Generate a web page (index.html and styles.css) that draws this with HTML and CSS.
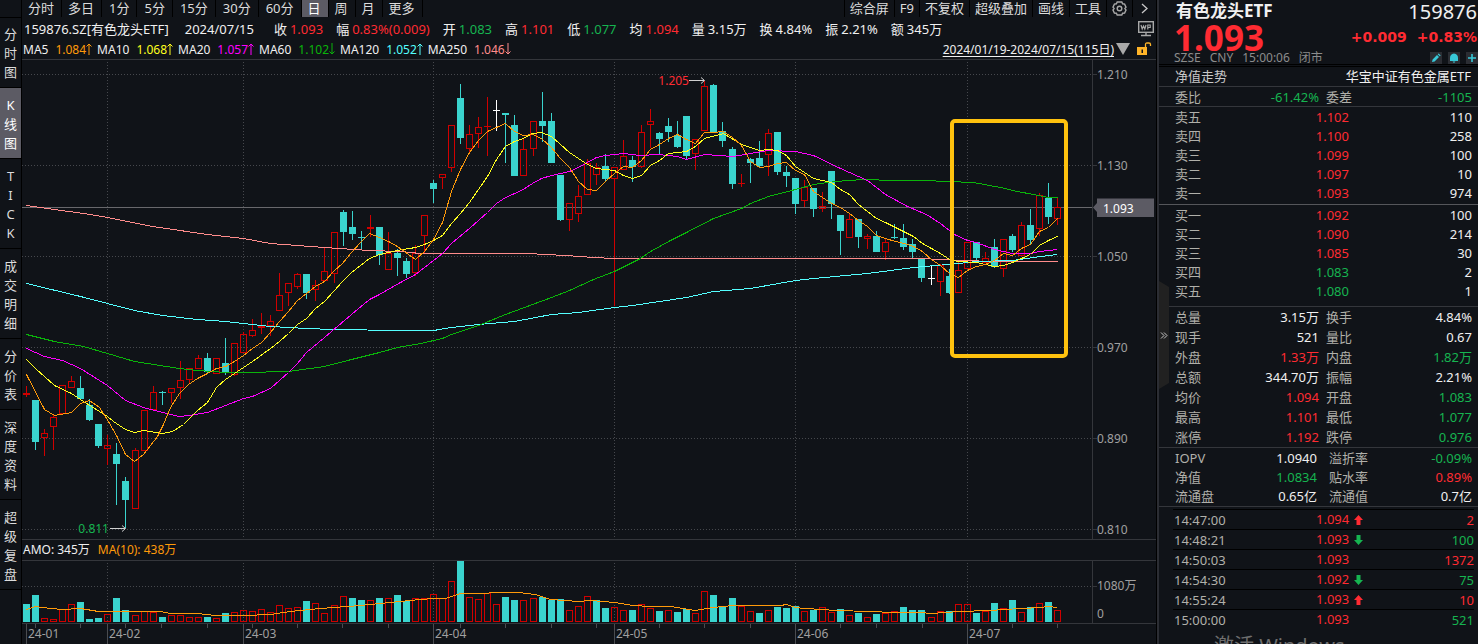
FILE: index.html
```html
<!DOCTYPE html>
<html lang="zh-CN">
<head>
<meta charset="utf-8">
<title>有色龙头ETF 159876</title>
<link rel="stylesheet" href="styles.css">
</head>
<body>
<div class="app">
  <nav class="side">
    <button class="side-item"><span>分</span><span>时</span><span>图</span></button>
    <button class="side-item active"><span>K</span><span>线</span><span>图</span></button>
    <button class="side-item"><span>T</span><span>I</span><span>C</span><span>K</span></button>
    <button class="side-item"><span>成</span><span>交</span><span>明</span><span>细</span></button>
    <button class="side-item"><span>分</span><span>价</span><span>表</span></button>
    <button class="side-item"><span>深</span><span>度</span><span>资</span><span>料</span></button>
    <button class="side-item"><span>超</span><span>级</span><span>复</span><span>盘</span></button>
  </nav>

  <main class="main">
    <div class="toolbar">
      <div class="tabs">
        <button class="tab">分时</button><button class="tab">多日</button><button class="tab num">1分</button><button class="tab num">5分</button><button class="tab num">15分</button><button class="tab num">30分</button><button class="tab num">60分</button><button class="tab active">日</button><button class="tab">周</button><button class="tab">月</button><button class="tab">更多</button>
      </div>
      <div class="tools">
        <button class="tool">综合屏</button><button class="tool">F9</button><button class="tool">不复权</button><button class="tool">超级叠加</button><button class="tool">画线</button><button class="tool">工具</button>
        <button class="tool" aria-label="设置"><svg width="15" height="15" viewBox="0 0 15 15" fill="none" stroke="#a8a8a8" stroke-width="1.4"><path d="M5.2 1h4.6l.8 1.8 2 .3L14 6.200 12.900 7.500 14 9l-1.400 3-2 .2-.8 1.800H5.200l-.8-1.800-2-.2L1 9l1.100-1.500L1 6.200l1.400-3.100 2-.3z"/><circle cx="7.500" cy="7.500" r="2.300"/></svg></button>
        <button class="tool last" aria-label="展开"><svg width="7" height="11" viewBox="0 0 7 11" fill="none" stroke="#c8c8c8" stroke-width="1.3"><path d="M1 1l5 4.500L1 10"/></svg></button>
      </div>
    </div>

    <div class="quote">
      <span class="code">159876.SZ[有色龙头ETF]</span><span class="date">2024/07/15</span>
      <span class="q">收<b class="up">1.093</b></span>
      <span class="q">幅<b class="up">0.83%(0.009)</b></span>
      <span class="q">开<b class="down">1.083</b></span>
      <span class="q">高<b class="up">1.101</b></span>
      <span class="q">低<b class="down">1.077</b></span>
      <span class="q">均<b class="up">1.094</b></span>
      <span class="q">量<b>3.15万</b></span>
      <span class="q">换<b>4.84%</b></span>
      <span class="q">振<b>2.21%</b></span>
      <span class="q">额<b>345万</b></span>
      <svg class="wp" width="16" height="16" viewBox="0 0 16 16" fill="none" stroke="#a8a8a8"><rect x=".7" y=".7" width="14.600" height="10.600" stroke-width="1.400"/><path d="M3 4l1.200 4L5.500 5l1.300 3L8 4M9.800 8.500V4h2.400v2.500H9.800" stroke-width="1.200"/><path d="M8 11.500v3M3 14.500h10" stroke-width="1.400"/></svg>
    </div>

    <div class="mas">
      <span class="ma">MA5<b class="c5">1.084<svg class="ar"><use href="#arUp"/></svg></b></span>
      <span class="ma">MA10<b class="c10">1.068<svg class="ar"><use href="#arUp"/></svg></b></span>
      <span class="ma">MA20<b class="c20">1.057<svg class="ar"><use href="#arUp"/></svg></b></span>
      <span class="ma">MA60<b class="c60">1.102<svg class="ar"><use href="#arDown"/></svg></b></span>
      <span class="ma">MA120<b class="c120">1.052<svg class="ar"><use href="#arUp"/></svg></b></span>
      <span class="ma">MA250<b class="c250">1.046<svg class="ar"><use href="#arDown"/></svg></b></span>
      <div class="range">
        <a class="range-link" href="#">2024/01/19-2024/07/15(115日)</a>
        <svg width="14" height="12" viewBox="0 0 14 12"><path d="M0 0h14L7 12z" fill="#a9a9a9"/></svg>
        <svg class="lock" width="16" height="14" viewBox="0 0 16 14"><rect x="1" y="5" width="10" height="8" fill="#ffb428"/><path d="M5.500 7.500h1.500v3.500H5.500z" fill="#11141a"/><path d="M9.500 5V2.500Q9.500 1 11 1h2q1.500 0 1.500 1.500V4" fill="none" stroke="#ffb428" stroke-width="1.300"/></svg>
      </div>
    </div>

    <section class="price-row">
      <div class="plot">
        <svg id="price" class="canvas" viewBox="22 60 1070 479" preserveAspectRatio="none"></svg>
        <div id="marks"></div>
      </div>
      <div class="axis" id="priceAxis"></div>
    </section>
    <div class="amo"><span>AMO: 345万</span><span class="c5">MA(10): 438万</span></div>
    <section class="vol-row">
      <div class="plot"><svg id="volume" class="canvas" viewBox="22 561 1070 62" preserveAspectRatio="none"></svg></div>
      <div class="axis" id="volAxis"></div>
    </section>
    <section class="date-row">
      <div class="plot"><svg id="ticks" class="canvas" viewBox="22 624 1070 20" preserveAspectRatio="none"></svg><div id="months"></div></div>
      <div class="axis-blank"></div>
    </section>
  </main>

  <aside class="panel">
    <button class="handle" aria-label="收起"><svg width="8" height="7" viewBox="0 0 8 7" fill="none" stroke="#c8c8c8"><path d="M1 .5l3 3-3 3M4 .5l3 3-3 3"/></svg></button>
    <header class="head">
      <div class="line1"><h1>有色龙头ETF</h1><span class="num-code">159876</span></div>
      <div class="line2 up"><span class="last-price">1.093</span><span class="chg">+0.009</span><span class="pct">+0.83%</span></div>
      <div class="line3"><span>SZSE</span><span>CNY</span><span>15:00:06</span><span>闭市</span>
        <div class="acts">
          <button class="act" aria-label="编辑"><svg width="12" height="12" viewBox="0 0 12 12"><path d="M2 10l.6-2.600 4.400-4.400 2 2-4.400 4.400zM7.700 2.300l1-.9 2 2-1 .9z" fill="#38c8d8"/></svg></button>
          <button class="act" aria-label="提醒"><svg width="12" height="12" viewBox="0 0 12 12"><path d="M2 9V6Q2 2 6 1.500 10 2 10 6v3zM4.500 9.500h3L6 11z" fill="#38c8d8"/></svg></button>
          <button class="act" aria-label="添加"><svg width="12" height="12" viewBox="0 0 12 12"><path d="M6 2v8M2 6h8" stroke="#38c8d8" stroke-width="1.600"/></svg></button>
        </div>
      </div>
    </header>
    <div class="fund"><span>净值走势</span><span>华宝中证有色金属ETF</span></div>
    <table class="stats single"><tbody>
      <tr><th>委比</th><td class="down">-61.42%</td><th>委差</th><td class="down">-1105</td></tr>
    </tbody></table>
    <table class="book sell"><tbody>
      <tr><th>卖五</th><td class="up">1.102</td><td>110</td></tr>
      <tr><th>卖四</th><td class="up">1.100</td><td>258</td></tr>
      <tr><th>卖三</th><td class="up">1.099</td><td>100</td></tr>
      <tr><th>卖二</th><td class="up">1.097</td><td>10</td></tr>
      <tr><th>卖一</th><td class="up">1.093</td><td>974</td></tr>
    </tbody></table>
    <table class="book buy"><tbody>
      <tr><th>买一</th><td class="up">1.092</td><td>100</td></tr>
      <tr><th>买二</th><td class="up">1.090</td><td>214</td></tr>
      <tr><th>买三</th><td class="up">1.085</td><td>30</td></tr>
      <tr><th>买四</th><td class="down">1.083</td><td>2</td></tr>
      <tr><th>买五</th><td class="down">1.080</td><td>1</td></tr>
    </tbody></table>
    <table class="stats"><tbody>
      <tr><th>总量</th><td>3.15万</td><th>换手</th><td>4.84%</td></tr>
      <tr><th>现手</th><td>521</td><th>量比</th><td>0.67</td></tr>
      <tr><th>外盘</th><td class="up">1.33万</td><th>内盘</th><td class="down">1.82万</td></tr>
      <tr><th>总额</th><td>344.70万</td><th>振幅</th><td>2.21%</td></tr>
      <tr><th>均价</th><td class="up">1.094</td><th>开盘</th><td class="down">1.083</td></tr>
      <tr><th>最高</th><td class="up">1.101</td><th>最低</th><td class="down">1.077</td></tr>
      <tr><th>涨停</th><td class="up">1.192</td><th>跌停</th><td class="down">0.976</td></tr>
    </tbody></table>
    <table class="stats iopv"><tbody>
      <tr><th>IOPV</th><td>1.0940</td><th>溢折率</th><td class="down">-0.09%</td></tr>
      <tr><th>净值</th><td class="down">1.0834</td><th>贴水率</th><td class="up">0.89%</td></tr>
      <tr><th>流通盘</th><td>0.65亿</td><th>流通值</th><td>0.7亿</td></tr>
    </tbody></table>
    <table class="trades"><tbody>
      <tr><th>14:47:00</th><td class="up">1.094<svg class="dir"><use href="#dirUp"/></svg></td><td class="up">2</td></tr>
      <tr><th>14:48:21</th><td class="up">1.093<svg class="dir down"><use href="#dirDown"/></svg></td><td class="down">100</td></tr>
      <tr><th>14:50:03</th><td class="up">1.093</td><td class="up">1372</td></tr>
      <tr><th>14:54:30</th><td class="up">1.092<svg class="dir down"><use href="#dirDown"/></svg></td><td class="down">75</td></tr>
      <tr><th>14:55:24</th><td class="up">1.093<svg class="dir"><use href="#dirUp"/></svg></td><td class="up">10</td></tr>
      <tr><th>15:00:00</th><td class="up">1.093</td><td class="down">521</td></tr>
    </tbody></table>
    <div class="watermark">激活 Windows</div>
  </aside>
</div>

<svg class="defs" width="0" height="0">
  <symbol id="arUp" viewBox="0 0 6 12"><path d="M3 12V1M.5 3.500L3 1l2.500 2.500" fill="none" stroke="currentColor"/></symbol>
  <symbol id="arDown" viewBox="0 0 6 12"><path d="M3 0v11M.5 8.500L3 11l2.500-2.500" fill="none" stroke="currentColor"/></symbol>
  <symbol id="dirUp" viewBox="0 0 9 10"><path d="M4.500 0L9 5H6.500v5h-4V5H0z" fill="currentColor"/></symbol>
  <symbol id="dirDown" viewBox="0 0 9 10"><path d="M4.500 10L0 5h2.500V0h4v5H9z" fill="currentColor"/></symbol>
</svg>
<script src="chart.js"></script>
</body>
</html>
```
FILE: styles.css
```css
:root {
  --bg: #101318;
  --line: #34363b;
  --text: #f0f0f0;
  --muted: #b0b0aa;
  --axis: #a0a0a0;
  --up: #ff2b32;
  --down: #16b450;
  --active: #5c5b64;
}
* { box-sizing: border-box; }
body {
  margin: 0;
  background: var(--bg);
  color: var(--text);
  font: 13px/19px "Noto Sans", "Noto Sans CJK SC", sans-serif;
}
button { margin: 0; padding: 0; border: 0; background: none; color: inherit; font: inherit; }
svg { display: block; }
b, th { font-weight: normal; }
.defs { position: absolute; }
.up { color: var(--up); }
.down { color: var(--down); }
.c5 { color: #ff9a0a; }
.c10 { color: #ffff1e; }
.c20 { color: #ff00ff; }
.c60 { color: #0ab40a; }
.c120 { color: #54ffff; }
.c250 { color: #ff8c8c; }

.app { display: flex; height: 100vh; overflow: hidden; }

.side { flex: none; width: 22px; padding-top: 17px; border-right: 1px solid #000; color: #dcdcdc; }
.side-item { display: flex; flex-direction: column; align-items: center; width: 100%; padding: 8px 0 5px; border-bottom: 1px solid #000; }
.side-item:first-child { padding-top: 7px; border-top: 1px solid #000; }
.side-item.active { background: var(--active); color: #fff; }

.main { flex: 1; min-width: 0; display: flex; flex-direction: column; border-right: 1px solid #000; }
.toolbar { display: flex; justify-content: space-between; height: 17px; line-height: 17px; color: #dcdcdc; }
.tabs, .tools { display: flex; white-space: nowrap; }
.tab { padding: 0 7px 0 6px; border-right: 1px solid #000; }
.tab.num { padding-left: 7px; }
.tab.active { background: var(--active); color: #fff; }
.tools { border-left: 1px solid #000; }
.tool { padding: 0 5px; border-right: 1px solid #000; }
.tool.last { padding: 0 8px; border: 0; }

.quote { display: flex; align-items: center; gap: 13px; height: 22px; padding: 2px 2px 0; white-space: nowrap; }
.date { padding: 0 7px 0 3px; }
.q { display: flex; gap: 3px; }
.wp { margin-left: auto; }

.mas { display: flex; align-items: center; gap: 5px; height: 20px; padding: 0 4px 0 1px; font-size: 12px; white-space: nowrap; }
.ma { display: flex; gap: 7px; }
.ma b { display: flex; align-items: center; }
.ar { width: 6px; height: 12px; }
.range { display: flex; align-items: center; gap: 2px; margin-left: auto; }
.range-link { color: var(--text); text-underline-offset: 2px; }
.lock { margin-left: 4px; }

.price-row, .vol-row, .date-row { display: flex; border-top: 1px solid var(--line); }
.price-row { flex: 1; min-height: 0; }
.vol-row { height: 63px; }
.date-row { height: 21px; }
.plot { position: relative; flex: 1; min-width: 0; }
.canvas { position: absolute; inset: 0; width: 100%; height: 100%; }
.axis { position: relative; width: 64px; border-left: 1px solid var(--line); color: var(--axis); font-size: 12px; }
.axis-blank { width: 64px; }
.axis-label { position: absolute; left: 0; display: flex; align-items: center; transform: translateY(-50%); line-height: 18px; }
.axis-label::before { content: ""; width: 4px; height: 1px; background: var(--line); }
.axis-label.plain::before { background: none; }
.axis-tag { position: absolute; left: 0; right: 2px; padding-left: 10px; line-height: 19px; transform: translateY(-50%); background: var(--active); color: #fff; clip-path: polygon(4px 0, 100% 0, 100% 100%, 4px 100%, 4px 14px, 0 50%, 4px 5px); }
.mark { position: absolute; transform: translate(-100%, -50%); font-size: 12px; line-height: 14px; }
.month { position: absolute; top: 0; padding-left: 2px; color: var(--axis); font-size: 12px; line-height: 19px; }
.amo { display: flex; gap: 8px; height: 21px; padding-left: 1px; border-top: 1px solid var(--line); font-size: 12px; }

.panel { position: relative; flex: none; width: 321px; border-left: 2px solid #2b2d33; overflow: hidden; white-space: nowrap; }
.panel table, .panel tbody { display: block; }
.panel th { padding: 0; text-align: left; color: var(--muted); }
.panel td { padding: 0; text-align: right; }
.handle { position: absolute; left: 0; top: 281px; width: 10px; height: 108px; padding-left: 1px; background: #212121; clip-path: polygon(0 0, 100% 6px, 100% 102px, 0 100%); }
.head { height: 67px; padding-left: 15px; border-bottom: 3px double #000; }
.line1 { display: flex; justify-content: space-between; height: 24px; line-height: 24px; padding: 0 1px 0 2px; }
.line1 h1 { margin: 0; font-size: 17px; line-height: 22px; }
.num-code { font-size: 20px; }
.line2 { display: flex; align-items: center; height: 27px; padding-right: 1px; font: bold 14px/27px "DejaVu Sans", sans-serif; }
.last-price { margin-right: auto; font: bold 35px/27px "Noto Sans", sans-serif; }
.chg { margin-right: 10px; }
.line3 { display: flex; align-items: center; gap: 9px; height: 13px; line-height: 15px; font-size: 12px; color: #8c8c8c; }
.acts { display: flex; gap: 6px; margin-left: auto; }
.act { background: #2b2d33; }

.fund, .stats, .book { border-bottom: 1px solid var(--line); }
.fund { display: flex; justify-content: space-between; height: 20px; padding: 0 7px 0 16px; }
.fund span:first-child { color: #c8c8c8; }
.stats tr, .book tr, .trades tr { display: flex; }
.stats { padding: 0 6px 0 16px; }
.stats th { width: 40px; line-height: 20px; }
.stats td { width: 104px; line-height: 20px; }
.stats th:nth-child(3) { width: 47px; padding-left: 7px; }
.stats td:last-child { flex: 1; }
.stats.single { padding-top: 1px; }
.stats.single th, .stats.single td { line-height: 18px; }
.stats.iopv { padding-top: 1px; }
.stats.iopv th, .stats.iopv td { line-height: 19px; }
.stats.iopv td:nth-child(2) { width: 102px; }
.stats.iopv th:nth-child(3) { width: 60px; padding-left: 12px; }
.book { padding: 1px 6px 0 16px; }
.book th { width: 60px; }
.book td { width: 114px; }
.book td:last-child { flex: 1; }
.book.sell { padding-bottom: 1px; border-color: #55565a; }
.book.buy { padding-bottom: 5px; }
.trades { margin-top: 2px; padding: 0 4px 0 14px; }
.trades tr { padding-left: 1px; border-top: 1px solid #000; }
.trades th { width: 142px; line-height: 21px; height: 19px; }
.trades td { height: 19px; line-height: 21px; }
.trades td:nth-child(2) { display: flex; align-items: center; gap: 5px; }
.trades td:last-child { flex: 1; }
.dir { width: 9px; height: 10px; }
.watermark { position: absolute; left: 55px; top: 634px; font-size: 20px; line-height: 24px; color: #6e6e6e; }
```
FILE: chart.js
```js
// [type, high, open/close top, open/close bottom, low, volume type, volume top]
// r = rising (hollow), c = falling (filled), w = unchanged
const candles = `r 386 393 395 397 c 604|c 400 400 442 450 c 595|r 429 433 438 456 r 618|r 415 417 427 450 r 619|r 385 385 414 414 r 609
r 376 381 388 388 r 604|c 376 388 399 400 c 602|c 399 405 420 421 c 619|c 424 424 446 448 c 618|r 435 445 449 465 r 614
c 443 454 464 505 c 598|c 477 481 500 528 c 610|r 448 450 509 509 r 615|r 410 410 451 451 r 611|r 386 392 410 410 r 612
c 391 392 393 405 c 617|r 388 388 393 403 r 615|r 361 380 388 399 r 615|r 368 368 380 383 r 617|r 355 358 369 369 r 617
c 353 358 372 373 c 617|r 358 358 374 374 r 618|c 338 363 372 375 c 613|r 343 343 375 376 r 612|r 332 334 353 353 r 610
r 319 330 336 337 r 611|r 313 326 328 334 r 609|r 315 321 326 336 r 612|r 273 295 311 311 r 605|r 283 283 293 306 r 608
r 273 274 287 289 r 607|c 274 274 293 299 c 601|r 280 285 290 301 r 603|r 247 271 281 281 r 613|r 232 232 274 283 r 605
c 210 212 232 246 r 596|c 211 227 234 240 c 598|c 231 237 238 249 c 600|r 215 227 229 237 r 600|c 227 227 255 265 c 598
r 232 253 270 270 r 598|c 249 253 258 276 c 595|c 258 261 274 278 c 601|r 245 253 273 276 r 598|r 215 215 236 253 r 598
c 180 183 189 203 r 594|r 174 174 178 189 r 598|r 125 125 168 172 r 581|c 84 98 138 144 c 561|r 125 134 149 152 r 597
r 117 127 134 148 r 599|r 97 126 127 156 r 593|w 100 110 111 131 r 604|c 113 113 115 163 c 597|c 115 125 176 176 c 600
r 139 149 176 176 r 600|r 121 121 149 156 r 598|c 92 121 126 142 c 597|c 113 121 163 163 c 600|c 175 175 220 221 c 599
r 203 203 220 231 r 610|r 185 196 214 222 r 606|r 159 163 195 195 r 596|r 163 167 175 185 c 600|c 154 166 179 182 c 608
r 167 167 179 306 r 607|r 140 156 170 170 r 610|c 156 160 167 182 c 610|r 125 132 167 168 r 604|r 109 121 125 148 r 608
c 132 133 139 155 c 611|c 118 126 132 142 r 610|c 121 135 147 148 c 612|c 116 116 156 160 c 609|r 139 139 154 170 r 613
r 81 86 131 131 r 591|c 84 85 132 132 c 595|c 122 131 141 147 c 607|c 147 149 184 189 c 598|r 174 183 184 187 r 606
c 158 159 163 183 r 611|c 141 158 166 167 c 613|r 129 133 155 176 r 610|c 132 132 172 175 c 607|c 166 172 176 187 c 608
c 178 178 204 214 c 606|r 180 187 201 207 r 611|c 188 188 209 217 c 610|r 192 206 209 212 r 607|c 171 171 204 219 r 612
c 215 215 231 255 c 609|r 214 219 238 238 r 615|c 219 219 237 248 c 613|r 234 236 239 249 r 617|c 231 236 252 252 c 614
r 238 242 252 260 r 613|c 224 237 238 239 r 611|c 224 238 247 250 c 607|c 239 244 252 258 c 610|c 259 259 278 282 c 610
w 265 278 279 285 r 617|r 264 265 282 296 r 611|c 269 276 293 294 c 611|r 261 270 293 293 r 604|r 242 242 269 269 r 604
c 242 242 258 260 c 613|r 252 258 263 263 r 611|c 239 247 267 268 c 603|r 239 239 269 277 r 608|c 234 236 250 252 c 600
r 222 225 256 256 r 612|c 209 225 240 244 c 607|r 193 195 229 236 r 603|c 183 198 217 224 c 602|r 198 207 219 225 r 610`
  .split(/[|\n]/).map(s => s.split(' ').map(v => isNaN(v) ? v : +v));

const averages = [
  ['#ff8c8c', '26,205 54,209 83,213 107,217 152,226 207,234 243,238 270,243 324,247 369,250 400,251 420,253 527,253 565,255 593,257 613,258 917,258 943,259 957,260 1000,261 1057,261'],
  ['#54ffff', '26,283 80,296 107,303 134,310 162,315 197,319 225,321 243,323 270,326 306,328 333,329 400,330 433,330 451,327 478,324 514,321 551,314 578,312 614,307 632,305 686,297 713,291 750,288 795,280 813,278 867,273 913,267 958,263 976,261 1012,260 1033,257 1057,254'],
  ['#0ab40a', '26,334 54,341 83,346 107,353 134,361 179,368 197,370 225,372 243,372 288,371 324,366 351,359 379,352 397,347 420,343 442,338 451,334 478,325 505,314 532,304 551,297 569,290 593,279 614,271 640,258 650,251 670,240 686,232 713,218 741,208 750,203 768,196 795,189 813,184 835,181 863,179 893,180 923,180 947,181 973,182 1000,187 1017,191 1033,194 1048,197 1057,197'],
  ['#ff00ff', '26,348 44,356 62,360 71,364 80,368 107,385 125,400 143,407 162,412 179,416 188,415 207,412 225,405 243,398 252,396 270,388 288,372 297,363 306,352 324,337 351,314 369,299 379,294 400,282 415,274 424,267 442,253 451,243 469,228 487,212 496,203 505,197 521,190 532,183 541,178 551,175 569,171 578,167 596,157 605,155 623,153 640,155 657,154 677,156 686,159 704,154 733,156 750,153 768,150 795,151 813,155 840,168 867,180 885,194 907,206 926,214 940,223 954,234 967,240 976,242 994,249 1012,253 1030,253 1039,251 1057,249'],
  ['#ffff1e', '26,359 35,368 54,385 71,393 83,401 107,416 113,421 125,429 134,432 143,430 162,433 172,431 183,424 197,410 207,402 216,387 225,379 234,373 252,361 270,348 279,341 288,333 297,324 306,318 315,308 324,301 342,281 351,272 360,265 369,258 379,254 397,250 415,247 424,244 433,240 442,235 451,223 460,213 469,202 478,189 487,176 496,159 505,146 514,141 523,138 532,133 541,132 551,136 560,144 569,152 578,158 587,164 596,168 614,170 623,175 632,178 641,175 650,165 659,160 668,153 686,151 695,146 704,138 723,133 741,144 750,147 759,150 768,149 777,150 786,155 795,166 813,178 831,182 840,189 849,194 858,204 876,218 885,222 913,236 922,243 940,253 949,259 958,261 976,262 994,266 1003,265 1012,262 1030,254 1039,245 1048,240 1057,236'],
  ['#ff9a0a', '26,374 44,409 54,415 71,412 80,403 89,400 99,407 108,421 116,435 125,454 134,461 143,454 157,436 163,424 170,407 179,393 188,384 197,378 207,373 216,368 225,366 234,361 243,355 252,348 261,342 270,332 279,321 288,311 297,300 306,293 315,286 324,281 333,271 342,263 351,252 360,242 369,233 379,237 388,241 397,246 415,259 424,251 433,239 442,222 451,191 460,169 469,152 478,140 487,131 496,127 505,123 514,131 523,135 532,134 541,138 551,147 560,158 569,167 578,181 587,189 596,190 605,181 614,173 623,166 632,167 641,160 650,149 659,144 668,138 677,134 686,139 695,143 704,132 713,132 723,131 732,137 741,145 750,161 759,167 768,166 777,163 786,162 795,170 804,174 813,191 831,203 840,207 849,213 858,220 867,226 876,235 885,238 895,241 904,243 913,246 922,251 931,259 940,265 949,273 958,277 967,270 976,266 985,264 994,260 1003,253 1012,255 1021,248 1030,244 1039,231 1048,227 1057,218']
];
const volumeAverage = '26,609 35,606 50,608 62,609 80,608 98,611 145,611 160,611 170,613 197,613 215,615 243,615 270,614 290,611 320,608 360,605 400,601 420,599 433,598 445,598 460,593 518,592 535,594 550,599 578,601 590,600 614,602 632,605 650,606 670,606 695,610 713,607 732,605 780,605 786,604 795,607 804,608 822,609 835,610 870,611 893,612 920,612 931,613 945,612 958,611 990,610 1003,609 1040,607 1048,606 1057,607';

const RED = '#d00000', CYAN = '#3ad4ce', GRID = '#46484d';
const months = [[26, '24-01'], [107, '24-02'], [243, '24-03'], [433, '24-04'], [614, '24-05'], [795, '24-06'], [967, '24-07']];
const $ = id => document.getElementById(id);

const line = (x1, y1, x2, y2, color, extra = '') =>
  `<path d="M${x1} ${y1}L${x2} ${y2}" stroke="${color}" shape-rendering="crispEdges" ${extra}/>`;
const poly = (points, color) =>
  `<polyline points="${points}" fill="none" stroke="${color}" shape-rendering="crispEdges" transform="translate(.5 .5)"/>`;
const dotted = 'stroke-dasharray="1 2"';
const centre = i => 26 + Math.round(i * 9.045);

function body(x, top, bottom, type) {
  if (type === 'r' && bottom - top > 2)
    return `<rect x="${x - 2.5}" y="${top + .5}" width="6" height="${bottom - top - 1}" fill="none" stroke="${RED}" shape-rendering="crispEdges"/>`;
  const fill = { r: RED, c: CYAN, w: '#fff' }[type];
  return `<rect x="${x - 3}" y="${top}" width="7" height="${bottom - top}" fill="${fill}" shape-rendering="crispEdges"/>`;
}

function drawPrice() {
  let s = '';
  for (let y = 74; y < 539; y += 91) s += line(22, y + .5, 1092, y + .5, GRID, dotted);
  months.slice(1).forEach(([x]) => s += line(x + .5, 62, x + .5, 537, GRID, dotted));
  s += line(22, 207.5, 1092, 207.5, '#68686c');
  candles.forEach(([type, high, top, bottom, low], i) => {
    const x = centre(i), color = { r: RED, c: CYAN, w: '#fff' }[type];
    if (high < top) s += line(x + .5, high, x + .5, top, color);
    if (low > bottom) s += line(x + .5, bottom, x + .5, low, color);
    s += body(x, top, bottom, type);
  });
  averages.forEach(([color, points]) => s += poly(points, color));
  s += '<path d="M689 80.500h15M701 77.500l3.500 3-3.500 3M110 528.500h15M122 525.500l3.500 3-3.500 3" fill="none" stroke="#d0d0d0"/>';
  s += '<rect x="952" y="121" width="114" height="235" rx="3" fill="none" stroke="#ffc20e" stroke-width="4"/>';
  $('price').innerHTML = s;
}

function drawVolume() {
  let s = line(22, 586.5, 1092, 586.5, GRID, dotted);
  months.slice(1).forEach(([x]) => s += line(x + .5, 563, x + .5, 622, GRID, dotted));
  candles.forEach((c, i) => s += body(centre(i), c[6], 622, c[5]));
  $('volume').innerHTML = s + poly(volumeAverage, '#ff9a0a');
}

function drawAxes() {
  const top = y => ((y - 60) / 479 * 100) + '%';
  const left = x => ((x - 22) / 1070 * 100) + '%';
  $('priceAxis').innerHTML = ['1.210', '1.130', '1.050', '0.970', '0.890', '0.810']
    .map((t, i) => `<span class="axis-label" style="top:${top(74.5 + 91 * i)}">${t}</span>`).join('')
    + `<span class="axis-tag" style="top:${top(207.5)}">1.093</span>`;
  $('volAxis').innerHTML = `<span class="axis-label" style="top:41%">1080万</span><span class="axis-label plain" style="top:85%">0</span>`;
  $('marks').innerHTML = `<span class="mark up" style="left:${left(689)};top:${top(80.5)}">1.205</span><span class="mark down" style="left:${left(109)};top:${top(528.5)}">0.811</span>`;
  const minor = [35, 80, 125, 161, 207, 252, 297, 342, 388, 460, 505, 551, 596, 659, 704, 750, 840, 876, 922, 1012, 1057];
  $('ticks').innerHTML = minor.map(x => line(x + .5, 624, x + .5, 628, '#4a4c50')).join('')
    + months.map(([x]) => line(x + .5, 624, x + .5, 644, '#4a4c50')).join('');
  $('months').innerHTML = months.map(([x, t]) => `<span class="month" style="left:${left(x)}">${t}</span>`).join('');
}

drawPrice();
drawVolume();
drawAxes();
```
